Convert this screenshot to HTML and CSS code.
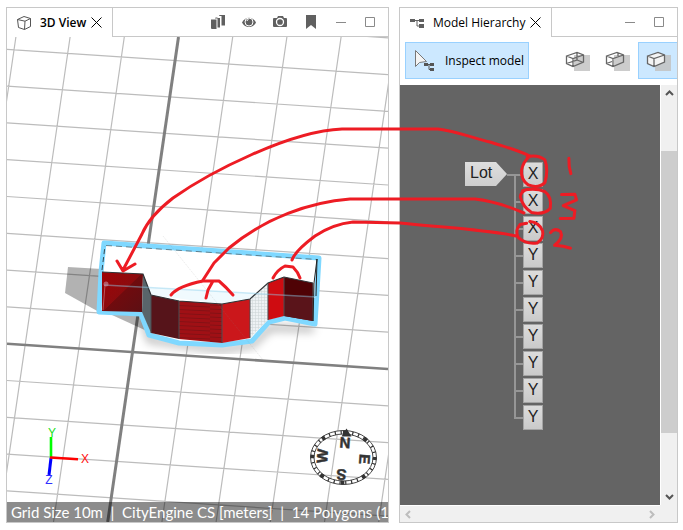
FILE: index.html
```
<!DOCTYPE html>
<html lang="en">
<head>
    <meta charset="UTF-8">
    <meta name="viewport" content="width=device-width, initial-scale=1.0">
    <title>CityEngine - 3D View / Model Hierarchy</title>
    <link rel="stylesheet" href="styles.css">
</head>
<body>
    <main class="workspace">
        <section class="panel">
            <header class="panel-header">
                <div class="tab">
                    <svg class="icon" viewBox="0 0 16 16"><path d="M1.5 4.5 8 1.500 14.500 3.500v8L8.500 14.500 2.500 12.500zM1.500 4.500 9 6.200 14.500 3.500M9 6.200 8.500 14.500" fill="none" stroke="#555"/></svg>
                    <h2 class="tab-title active">3D View</h2>
                    <button class="close" aria-label="Close 3D View"><svg viewBox="0 0 11 11"><path d="M.5.5l10 10M10.500.5l-10 10" fill="none" stroke="#000"/></svg></button>
                </div>
                <div class="panel-tools">
                    <div class="view-tools">
                        <button class="tool" aria-label="Views"><svg viewBox="0 0 16 16"><path d="M1 5.500h5.500V15H2q-1 0-1-1zM7.500 4H10v9.500H7.500V4.500H5q0-1 1-1h1.500zM11.500 11.500V2H9q0-1 1-1h5v10.500z" fill="#606060"/></svg></button>
                        <button class="tool" aria-label="Visibility"><svg viewBox="0 0 16 16"><path d="M1 8.500C4 2 12 2 15 8.500 12 14.500 4 14.500 1 8.500z" fill="#606060"/><circle cx="8" cy="8" r="4" fill="#606060" stroke="#fff"/><path d="M6 7q0-1.500 1.500-1.500" fill="none" stroke="#fff"/></svg></button>
                        <button class="tool" aria-label="Snapshot"><svg viewBox="0 0 16 16"><path d="M2 4h3l1-2h5l1 2h2q1 0 1 1v7q0 1-1 1H2q-1 0-1-1V5q0-1 1-1z" fill="#606060"/><circle cx="8" cy="8" r="3.500" fill="#606060" stroke="#fff" stroke-width="1.300"/></svg></button>
                        <button class="tool" aria-label="Bookmarks"><svg viewBox="0 0 16 16"><path d="M3 1h10v14l-5-4-5 4z" fill="#606060"/></svg></button>
                    </div>
                    <div class="window-tools">
                        <button class="tool" aria-label="Minimize"><svg viewBox="0 0 16 16"><path d="M3 8.500h10" stroke="#8a8a8a"/></svg></button>
                        <button class="tool" aria-label="Maximize"><svg viewBox="0 0 16 16"><path d="M3.500 3.500h9v9h-9z" fill="none" stroke="#8a8a8a"/></svg></button>
                    </div>
                </div>
            </header>
            <div class="viewport">
                <svg class="scene" viewBox="7 37 381 485" preserveAspectRatio="xMinYMin slice">
                    <defs>
                        <linearGradient id="wall" x1="0" y1="0" x2="1" y2="1">
                            <stop offset="0" stop-color="#a00306"/>
                            <stop offset="0.500" stop-color="#8c0b0e"/>
                            <stop offset="0.510" stop-color="#700b0e"/>
                            <stop offset="1" stop-color="#5c1014"/>
                        </linearGradient>
                        <pattern id="brick" width="3" height="3" patternUnits="userSpaceOnUse">
                            <path d="M0 .5h3M.5 0v3" stroke="#cbd2d5" stroke-width="0.500"/>
                        </pattern>
                        <pattern id="stripe" width="42" height="4" patternUnits="userSpaceOnUse">
                            <path d="M0 1l42 2" stroke="#7c1014" stroke-width="0.800"/>
                        </pattern>
                        <filter id="soft"><feGaussianBlur stdDeviation="4"/></filter>
                    </defs>
                    <!-- ground grid -->
                    <g id="grid" fill="none" stroke="#bcbcbc" stroke-width="1.200"></g>
                    <path d="M178.500 37 107.700 522" stroke="#808080" stroke-width="3"/>
                    <path d="M7 343.700 388 369" stroke="#808080" stroke-width="2.600"/>
                    <!-- shadows -->
                    <path d="M68 267 102 269 99 312 65 293z" fill="#000" fill-opacity="0.300"/>
                    <path d="M112 315 142 315 149 332z" fill="#000" fill-opacity="0.300"/>
                    <path d="M142 318 150 340 222 350 252 345 270 328 314 329" fill="none" stroke="#000" stroke-opacity="0.250" stroke-width="7" filter="url(#soft)"/>
                    <!-- building -->
                    <path d="M104 243 319 258 315 324 285 318 269 322 252 341 222 345 179 343 149 335 141 314 99 312 101 272z" fill="#fff" stroke="#7fd8ff" stroke-width="5" stroke-linejoin="round"/>
                    <path d="M144 287 316 297 284 315 222 304 151 295z" fill="#f0fafe"/>
                    <path d="M102 272 143 274 142 312 102 311z" fill="url(#wall)"/>
                    <path d="M143 274 151 295 151 333 142 312z" fill="#59656a"/>
                    <path d="M151 295 179 301 179 339 151 333z" fill="#56141a"/>
                    <path d="M179 301 222 304 222 343 179 339z" fill="#a01015"/>
                    <path d="M179 301 222 304 222 343 179 339z" fill="url(#stripe)"/>
                    <path d="M222 304 250 299 250 338 222 343z" fill="#cb171b"/>
                    <path d="M250 299 268 283 268 320 250 338z" fill="#eef2f4"/>
                    <path d="M250 299 268 283 268 320 250 338z" fill="url(#brick)"/>
                    <path d="M268 283 284 277 284 316 268 320z" fill="#cf0c11"/>
                    <path d="M284 277 313 283 313 321 284 316z" fill="#4f0205"/>
                    <path d="M284 295 313 297 313 321 284 316z" fill="#5a141a"/>
                    <path d="M102 272 143 274 151 295 179 301 222 304 250 299 268 283 284 277 313 283" fill="none" stroke="#303437" stroke-width="1.200"/>
                    <path d="M151 295v38M179 301v38M222 304v39M250 299v39M268 283v37M284 277v39M313 283v38" stroke="#4a4f52"/>
                    <path d="M102 270 105 246" stroke="#222" stroke-width="0.800" stroke-dasharray="5 3"/>
                    <path d="M106 245.500 317 259.500" stroke="#444" stroke-width="0.600" stroke-dasharray="6 4"/>
                    <path d="M317 259 314 283 313 321M317 259 316 296" fill="none" stroke="#222"/>
                    <path d="M104 285 317 297" stroke="#8fd0ee" stroke-opacity="0.450" stroke-width="1.500"/>
                    <path d="M105 285 103 310" stroke="#e0a0a8" stroke-opacity="0.500"/>
                    <circle cx="106" cy="284" r="2.500" fill="#c890a0" fill-opacity="0.600"/>
                    <path d="M163 236 263 360" stroke="#888" stroke-opacity="0.300" stroke-width="0.500" stroke-dasharray="2 1"/>
                    <!-- axes -->
                    <g class="axis">
                        <path d="M51 458 49 475" stroke="#0000ff" stroke-width="3"/>
                        <path d="M51 458 51 437" stroke="#00ff00" stroke-width="2.600"/>
                        <path d="M50 457.500 78 459.300" stroke="#ff0000" stroke-width="2.600"/>
                        <text x="52" y="437" fill="#20e020">Y</text>
                        <text x="85" y="463" fill="#ff1010">X</text>
                        <text x="49" y="484" fill="#3030ff">Z</text>
                    </g>
                    <!-- compass -->
                    <g class="compass" transform="translate(343.500 457.500)">
                        <g fill="none" stroke="#333">
                            <ellipse rx="31.500" ry="25.500" stroke="#fff" stroke-opacity="0.800" stroke-width="4"/>
                            <ellipse rx="33" ry="27" stroke-width="0.900"/>
                            <ellipse rx="29.500" ry="23.500" stroke-width="0.900"/>
                            <ellipse rx="31.200" ry="25.200" stroke-width="3.500" stroke-dasharray="1.200 4.700"/>
                            <ellipse rx="31.200" ry="25.200" stroke-width="4" stroke-dasharray="3.500 18.700" stroke-dashoffset="1"/>
                        </g>
                        <path d="M3-29-2-21 8-21z" fill="#333"/>
                        <text transform="translate(1.500 -14.500) rotate(4)" y="5">N</text>
                        <text transform="translate(21 1.500) rotate(94)" y="5">E</text>
                        <text transform="translate(-2 17) rotate(184)" y="5">S</text>
                        <text transform="translate(-21 -1.500) rotate(-86)" y="5">W</text>
                    </g>
                </svg>
                <div class="status">Grid Size 10m&nbsp; |&nbsp; CityEngine CS [meters]&nbsp; |&nbsp; 14 Polygons (1</div>
            </div>
        </section>

        <section class="panel">
            <header class="panel-header">
                <div class="tab">
                    <svg class="icon" viewBox="0 0 16 16"><path d="M1 4h5v3H1zM10 4h5v3h-5zM10 9h5v4h-5z" fill="#606060"/><path d="M6 5.500h4M8 5.500v5.500h2" fill="none" stroke="#606060"/></svg>
                    <h2 class="tab-title">Model Hierarchy</h2>
                    <button class="close" aria-label="Close Model Hierarchy"><svg viewBox="0 0 11 11"><path d="M.5.5l10 10M10.500.5l-10 10" fill="none" stroke="#000"/></svg></button>
                </div>
                <div class="panel-tools">
                    <div class="window-tools">
                        <button class="tool" aria-label="Minimize"><svg viewBox="0 0 16 16"><path d="M3 8.500h10" stroke="#8a8a8a"/></svg></button>
                        <button class="tool" aria-label="Maximize"><svg viewBox="0 0 16 16"><path d="M3.500 3.500h9v9h-9z" fill="none" stroke="#8a8a8a"/></svg></button>
                    </div>
                </div>
            </header>
            <div class="toolbar">
                <button class="inspect">
                    <svg viewBox="0 0 22 24"><path d="M1.500 1.500v16l4-4 7-1z" fill="#f4f4f4" stroke="#777"/><path d="M10 14h4v3h-4zM16 14h4v3h-4zM16 19h4v3h-4z" fill="#555"/><path d="M14 15.500h2M15 15.500v5h1" fill="none" stroke="#555"/></svg>
                    <span>Inspect model</span>
                </button>
                <div class="modes">
                    <button class="mode" aria-label="Wireframe"><svg viewBox="0 0 26 22"><path d="M9 5h16v16H9z" fill="#ccc"/><path d="M1.500 6 12 2.500 18.500 5v7L8 16.500 1.500 13.500zM1.500 6 8 8.500 18.500 5M8 8.500v8M12 2.500V10L1.500 13.500M12 10l6.500 2.500" fill="none" stroke="#666" stroke-width="1.300"/></svg></button>
                    <button class="mode" aria-label="Wireframe on shaded"><svg viewBox="0 0 26 22"><path d="M9 5h16v16H9z" fill="#ccc"/><path d="M1.500 6 12 2.500 18.500 5v7L8 16.500 1.500 13.500zM1.500 6 8 8.500 18.500 5M8 8.500v8M13 2.500V6M1.500 13.500 7 11.500" fill="none" stroke="#666" stroke-width="1.300"/></svg></button>
                    <button class="mode selected" aria-label="Shaded" aria-pressed="true"><svg viewBox="0 0 26 22"><path d="M9 5h16v16H9z" fill="#c4c8cb"/><path d="M1.500 6 12 2.500 18.500 5v7L8 16.500 1.500 13.500z" fill="#f4f4f4"/><path d="M1.500 6 12 2.500 18.500 5v7L8 16.500 1.500 13.500zM1.500 6 8 8.500 18.500 5M8 8.500v8" fill="none" stroke="#666" stroke-width="1.300"/></svg></button>
                </div>
            </div>
            <div class="hierarchy">
                <div class="tree">
                    <div class="root">Lot</div>
                    <ul class="children">
                        <li><span>X</span></li>
                        <li><span>X</span></li>
                        <li><span>X</span></li>
                        <li><span>Y</span></li>
                        <li><span>Y</span></li>
                        <li><span>Y</span></li>
                        <li><span>Y</span></li>
                        <li><span>Y</span></li>
                        <li><span>Y</span></li>
                        <li><span>Y</span></li>
                    </ul>
                </div>
                <div class="scroll-y">
                    <svg viewBox="0 0 15 15"><path d="M4 10l3.500-3.500L11 10" fill="none" stroke="#555" stroke-width="2"/></svg>
                    <div class="thumb"></div>
                    <svg viewBox="0 0 15 15"><path d="M4 5l3.500 3.500L11 5" fill="none" stroke="#555" stroke-width="2"/></svg>
                </div>
                <div class="scroll-x">
                    <svg viewBox="0 0 15 15"><path d="M10 4 6.500 7.500 10 11" fill="none" stroke="#bdbdbd" stroke-width="2"/></svg>
                    <svg viewBox="0 0 15 15"><path d="M5 4l3.500 3.500L5 11" fill="none" stroke="#bdbdbd" stroke-width="2"/></svg>
                </div>
            </div>
        </section>

        <!-- hand-drawn notes over both panels -->
        <svg class="notes" viewBox="0 0 683 530" preserveAspectRatio="xMinYMin meet">
            <path d="M530 156C515 149 505 147 490 142 470 137 455 131 438 129L342 129C290 131 210 172 173 198 160 208 148 220 142 234L123 270M117 261 123 271 135 264"/>
            <path d="M524 213C510 207 495 201 475 199L350 199C310 202 265 218 229 248L214 263 203 280"/>
            <path d="M171 295Q178 286 203 281L219 281Q226 287 233 295M213 281 208 290 206 298"/>
            <path d="M516 236C490 230 450 228 400 223L353 222Q333 224 315 236 295 251 292 260"/>
            <path d="M273 278Q277 270 285 266L293 267Q298 272 300 278"/>
            <g transform="translate(450 140) scale(0.333)">
                <path d="M232 50Q265 43 285 60 296 90 285 128 265 147 235 135 212 120 215 90 220 65 238 50"/>
                <path d="M218 152Q255 143 285 155 306 170 301 205 285 225 245 218 218 200 211 170 213 155 230 148"/>
                <path d="M230 250 210 254Q193 275 206 294 230 314 262 309 283 295 278 273 267 247 240 245"/>
                <path d="M357 55 358 80 363 101"/>
                <path d="M335 164 375 163 380 180 340 197 375 212 372 235 331 236"/>
                <path d="M302 278Q315 262 332 275 342 295 314 316L340 319 362 325"/>
            </g>
        </svg>
    </main>

    <script>
        // ground grid: two families of parallel lines
        const grid = document.getElementById('grid');
        let d = '';
        for (let i = -3; i <= 5; i++) {
            const x = 178.5 + i * 54.2;
            if (i !== 0) d += `M${x} 37L${x - 70.8} 522`;
        }
        for (let i = -9; i <= 4; i++) {
            const y = 343.7 + i * 36.8;
            if (i !== 0) d += `M7 ${y}L388 ${y + 25.3}`;
        }
        grid.innerHTML = `<path d="${d}"/>`;
    </script>
</body>
</html>
```
FILE: styles.css
```
* {
    margin: 0;
    padding: 0;
    box-sizing: border-box;
}

body {
    font-family: "Open Sans", "Noto Sans", sans-serif;
    font-size: 12px;
    color: #000;
    background: #fff;
}

button {
    border: none;
    background: none;
    font: inherit;
    color: inherit;
}

svg {
    display: block;
}

.workspace {
    position: relative;
    display: grid;
    grid-template-columns: 383fr 279fr;
    gap: 10px;
    height: 100vh;
    padding: 7px 5px 7px 6px;
}

.panel {
    display: flex;
    flex-direction: column;
    min-width: 0;
    border: 1px solid #c8c8c8;
    overflow: hidden;
}

.panel-header {
    display: flex;
    height: 29px;
    flex-shrink: 0;
}

.tab {
    display: flex;
    align-items: center;
    gap: 8px;
    padding: 0 10px 0 9px;
    border-right: 1px solid #c8c8c8;
}

.icon {
    width: 16px;
    height: 16px;
}

.tab-title {
    font-size: 12px;
    font-weight: 400;
    white-space: nowrap;
}

.tab-title.active {
    font-weight: 600;
}

.close {
    margin-left: -3px;
}

.close svg {
    width: 11px;
    height: 11px;
}

.panel-tools {
    flex: 1;
    display: flex;
    align-items: center;
    justify-content: flex-end;
    gap: 14px;
    padding-right: 10px;
    border-bottom: 1px solid #c8c8c8;
}

.view-tools {
    display: flex;
    gap: 15px;
}

.window-tools {
    display: flex;
    gap: 13px;
}

.tool svg {
    width: 16px;
    height: 16px;
}

.viewport {
    position: relative;
    flex: 1;
    min-height: 0;
}

.scene {
    width: 100%;
    height: 100%;
}

.axis text {
    font: 12px "Liberation Sans", sans-serif;
    text-anchor: middle;
}

.compass text {
    font: bold 15px "Liberation Sans", sans-serif;
    fill: #333;
    stroke: #333;
    stroke-width: 0.5px;
    text-anchor: middle;
}

.status {
    position: absolute;
    left: 0;
    right: 0;
    bottom: 0;
    height: 20px;
    padding-left: 4px;
    overflow: hidden;
    white-space: nowrap;
    font: 15px/20px Lato, sans-serif;
    color: #fff;
    background: rgba(0, 0, 0, 0.45);
}

.toolbar {
    display: flex;
    justify-content: space-between;
    flex-shrink: 0;
    height: 48px;
    padding: 5px 0 5px 5px;
}

.inspect {
    display: flex;
    align-items: center;
    gap: 9px;
    height: 37px;
    padding: 0 4px 0 8px;
    border: 1px solid #99d1ff;
    background: #cce8ff;
    white-space: nowrap;
}

.inspect svg {
    width: 22px;
    height: 24px;
}

.modes {
    display: flex;
    margin-right: -1px;
}

.mode {
    width: 40px;
    height: 37px;
    padding-left: 7px;
}

.mode svg {
    width: 26px;
    height: 22px;
}

.mode.selected {
    border: 1px solid #99d1ff;
    border-right: none;
    background: #cce8ff;
}

.hierarchy {
    flex: 1;
    display: grid;
    grid-template-columns: 1fr 17px;
    grid-template-rows: 1fr 17px;
    min-height: 0;
    background: #f0f0f0;
}

.tree {
    display: flex;
    align-items: flex-start;
    padding: 77px 0 0 65px;
    background: #646464;
    font: 16px "Liberation Sans", sans-serif;
    color: #222;
}

.root {
    width: 42px;
    height: 24px;
    padding-left: 5px;
    line-height: 22px;
    background: linear-gradient(#dedede, #cecece);
    clip-path: polygon(0 0, 31px 0, 100% 50%, 31px 100%, 0 100%);
}

.children {
    position: relative;
    display: flex;
    flex-direction: column;
    gap: 2px;
    padding-left: 7px;
    list-style: none;
}

.children::before {
    content: "";
    position: absolute;
    left: 7px;
    top: 12px;
    bottom: 12px;
    width: 2px;
    background: #969696;
}

.children li {
    display: flex;
    align-items: center;
}

.children li::before {
    content: "";
    width: 9px;
    height: 2px;
    background: #969696;
}

.children li:first-child::before {
    width: 16px;
    margin-left: -7px;
}

.children span {
    width: 20px;
    height: 25px;
    border: 1px solid #a4a4a4;
    background: linear-gradient(#dcdcdc, #cacaca);
    line-height: 21px;
    text-align: center;
}

.scroll-y {
    display: flex;
    flex-direction: column;
    align-items: center;
    justify-content: space-between;
    border-left: 1px solid #fff;
}

.scroll-x {
    display: flex;
    justify-content: space-between;
    align-items: center;
    border-top: 1px solid #fff;
}

.scroll-y svg,
.scroll-x svg {
    width: 15px;
    height: 15px;
}

.thumb {
    width: 100%;
    height: 67%;
    margin-bottom: 6px;
    background: #cdcdcd;
}

.notes {
    position: absolute;
    left: 0;
    top: 0;
    width: 100%;
    height: 100%;
    pointer-events: none;
    fill: none;
    stroke: #ed1c24;
    stroke-width: 3px;
    stroke-linecap: round;
    stroke-linejoin: round;
}

.notes g {
    stroke-width: 9px;
}
```
